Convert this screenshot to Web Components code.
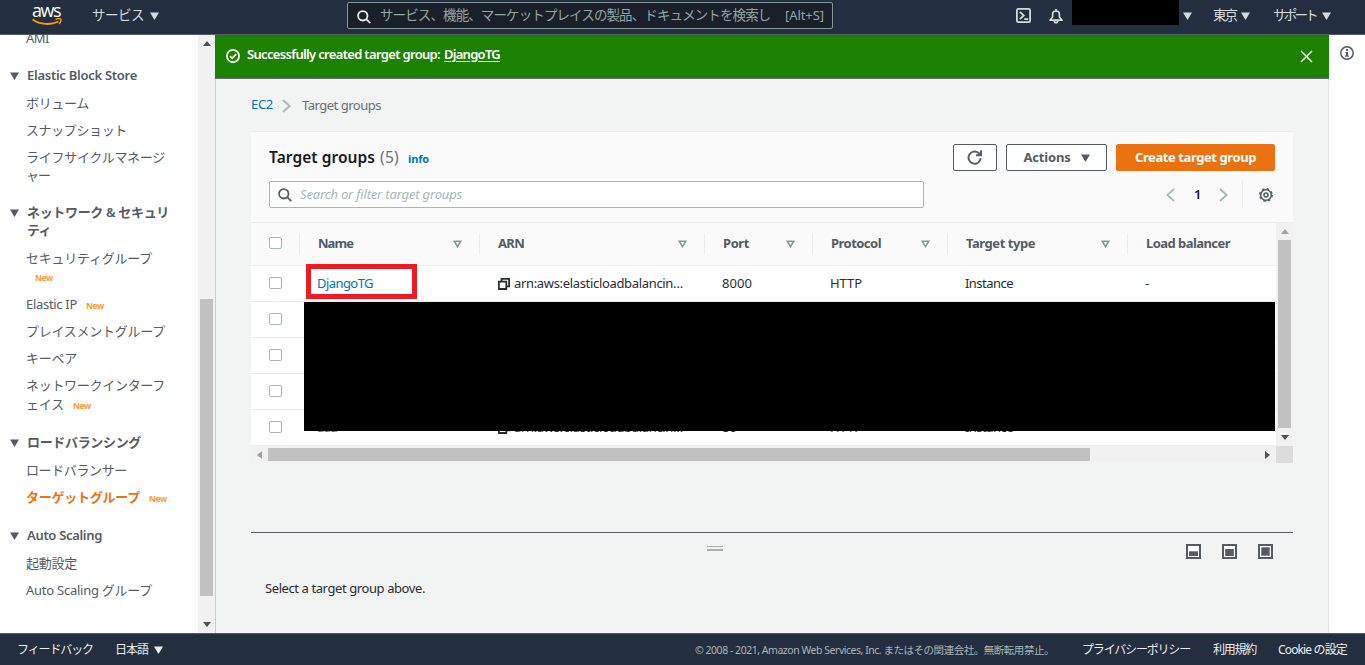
<!DOCTYPE html>
<html lang="ja">
<head>
<meta charset="utf-8">
<title>Target groups | EC2</title>
<style>
  html, body { margin: 0; height: 100%; overflow: hidden; }
  body { font: 13px/18px "Noto Sans", "Noto Sans CJK JP", sans-serif; color: #16191f; }
</style>
</head>
<body>
<console-app>
  <console-header slot="header"></console-header>
  <side-nav slot="nav">
    <nav-item style="--gap:-6px"><ui-text w="23">AMI</ui-text></nav-item>
    <nav-item section style="--gap:19px"><ui-text w="110">Elastic Block Store</ui-text></nav-item>
    <nav-item style="--gap:10px"><ui-text w="63">ボリューム</ui-text></nav-item>
    <nav-item><ui-text w="101">スナップショット</ui-text></nav-item>
    <nav-item><ui-text w="139">ライフサイクルマネージ</ui-text><br><ui-text w="24">ャー</ui-text></nav-item>
    <nav-item section style="--gap:19px"><ui-text w="142">ネットワーク &amp; セキュリ</ui-text><br><ui-text w="24">ティ</ui-text></nav-item>
    <nav-item style="--gap:10px"><ui-text w="126">セキュリティグループ</ui-text><br><new-tag></new-tag></nav-item>
    <nav-item style="--gap:10px"><ui-text w="51">Elastic IP</ui-text><new-tag></new-tag></nav-item>
    <nav-item><ui-text w="139">プレイスメントグループ</ui-text></nav-item>
    <nav-item><ui-text w="51">キーペア</ui-text></nav-item>
    <nav-item style="--line:19px"><ui-text w="139">ネットワークインターフ</ui-text><br><ui-text w="38">ェイス</ui-text><new-tag></new-tag></nav-item>
    <nav-item section style="--gap:19px"><ui-text w="114">ロードバランシング</ui-text></nav-item>
    <nav-item style="--gap:10px"><ui-text w="101">ロードバランサー</ui-text></nav-item>
    <nav-item active><ui-text w="114">ターゲットグループ</ui-text><new-tag></new-tag></nav-item>
    <nav-item section style="--gap:20px"><ui-text w="75">Auto Scaling</ui-text></nav-item>
    <nav-item style="--gap:10px"><ui-text w="51">起動設定</ui-text></nav-item>
    <nav-item><ui-text w="126">Auto Scaling グループ</ui-text></nav-item>
  </side-nav>
  <flash-bar slot="flash"><ui-text w="193">Successfully created target group:</ui-text><ui-text w="56" class="u">DjangoTG</ui-text></flash-bar>
  <bread-crumb><ui-text w="22" slot="root">EC2</ui-text><ui-text w="79">Target groups</ui-text></bread-crumb>
  <target-groups></target-groups>
  <split-panel><ui-text w="160">Select a target group above.</ui-text></split-panel>
  <console-footer slot="footer"></console-footer>
</console-app>

<script>
const ICONS = {
  down: [9, 8, '<path d="M0 .5h9L4.5 8z" fill="currentColor"/>'],
  filter: [9, 8, '<path d="M1.2 1.2h6.6L4.5 6.6z" fill="none" stroke="currentColor" stroke-width="1.6"/>'],
  search: [14, 14, '<g fill="none" stroke="currentColor" stroke-width="1.8"><circle cx="5.8" cy="5.8" r="4.7"/><path d="M9.2 9.2l4.1 4"/></g>'],
  shell: [15, 15, '<g fill="none" stroke="currentColor" stroke-width="1.8"><rect x=".9" y=".9" width="13.2" height="13.2" rx="1.6"/><path d="M3.8 3.8l4 3.7-4 3.7M8.2 11.2h4"/></g>'],
  bell: [14, 15, '<g fill="none" stroke="currentColor" stroke-width="1.7" stroke-linejoin="round"><path d="M1 11.2h12L10.4 8V5.6C10.4 3.3 9 2 7 2S3.6 3.3 3.6 5.6V8z"/><path d="M7 0v2"/><path d="M5.2 11.5c0 3 3.6 3 3.6 0"/></g>'],
  check: [14, 14, '<g fill="none" stroke="currentColor" stroke-width="1.7"><circle cx="7" cy="7" r="6.1"/><path d="M3.9 7l2.3 2.3 4-4.2"/></g>'],
  close: [13, 13, '<path d="M1 1l11 11M12 1L1 12" fill="none" stroke="currentColor" stroke-width="1.7"/>'],
  info: [14, 14, '<circle cx="7" cy="7" r="6.2" fill="none" stroke="currentColor" stroke-width="1.5"/><path d="M6 3h2v2H6zM5.2 6H8v3.5h1v1.2H5V9.500h1V7.100h-.8z" fill="currentColor"/>'],
  chevron: [9, 14, '<path d="M1 1l6.600 6L1 13" fill="none" stroke="currentColor" stroke-width="1.9"/>'],
  back: [9, 14, '<path d="M8 1L1.400 7 8 13" fill="none" stroke="currentColor" stroke-width="1.7"/>'],
  refresh: [16, 15, '<path d="M13.700 8.200A6.100 6.100 0 1 1 11.600 3l1.700 1.500M14 .3v5H9" fill="none" stroke="currentColor" stroke-width="1.9"/>'],
  copy: [12, 12, '<path d="M3.500 3.500v-2.600h7.600v7.400H9M.9 3.700h7.400V11H.9z" fill="none" stroke="currentColor" stroke-width="1.8"/>'],
  gear: [14, 14, '<g fill="none" stroke="currentColor"><circle cx="7" cy="7" r="5.300" stroke-width="1.5"/><circle cx="7" cy="7" r="6.200" stroke-width="1.5" stroke-dasharray="2.435 2.435"/><circle cx="7" cy="7" r="2" stroke-width="1.6"/></g>'],
  low: [15, 15, '<path d="M1 1h13v13H1z" fill="#fff" stroke="currentColor" stroke-width="2"/><path d="M3 7.300h9v4.700H3z" fill="currentColor"/>'],
  mid: [15, 15, '<path d="M1 1h13v13H1z" fill="#fff" stroke="currentColor" stroke-width="2"/><path d="M3.200 5h8.600v7H3.200z" fill="currentColor"/>'],
  full: [15, 15, '<path d="M1 1h13v13H1z" fill="#fff" stroke="currentColor" stroke-width="2"/><path d="M3.300 3.300h8.400v8.400H3.300z" fill="currentColor"/>'],
  smile: [30, 8, '<path d="M.6 1.500C8 6.800 19 7.200 26.500 3.500" fill="none" stroke="currentColor" stroke-width="1.9"/><path d="M23.500 1.300c2-.8 4.800-.8 5.300-.2.400 1-.3 3.500-1.700 5" fill="none" stroke="currentColor" stroke-width="1.4"/>']
};

// small helper: one open shadow root per element
class Base extends HTMLElement {
  connectedCallback() {
    if (this.shadowRoot) return;
    this.attachShadow({ mode: 'open' }).innerHTML = '<style>:host{display:block;box-sizing:border-box}</style>' + this.html();
  }
}

customElements.define('ui-icon', class extends Base {
  html() {
    const [w, h, body] = ICONS[this.getAttribute('name')];
    return `<style>:host{flex:none;width:${w}px;height:${h}px}svg{display:block}</style>
      <svg width="${w}" height="${h}" viewBox="0 0 ${w} ${h}">${body}</svg>`;
  }
});

customElements.define('console-app', class extends Base {
  html() {
    return `<style>
      :host { height: 665px; display: grid; grid-template-rows: 35px 598px 32px; }
      .middle { display: grid; grid-template-columns: 215px 1114px 36px; }
      .content { background: #f2f3f3; overflow: hidden; box-shadow: inset 1px 0 #ccc, inset -1px 0 #e3e3e3; }
      .main { padding: 0 36px; }
      .help { padding: 11px 0 0 11px; color: #545b64; background: #fff; }
    </style>
    <slot name="header"></slot>
    <div class="middle">
      <slot name="nav"></slot>
      <div class="content"><slot name="flash"></slot><div class="main"><slot></slot></div></div>
      <div class="help"><ui-icon name="info"></ui-icon></div>
    </div>
    <slot name="footer"></slot>`;
  }
});

customElements.define('console-header', class extends Base {
  html() {
    return `<style>
      :host { height: 35px; display: flex; align-items: flex-start; background: #232f3e; border-bottom: 1px solid #545b64; color: #d5dbdb; }
      :host > * { flex: none; }
      .logo { width: 30px; margin: 3px 30px 0 32px; color: #fff; font: 500 18px/14px "Open Sans", sans-serif; }
      .logo ui-icon { color: #f90; margin-top: 1px; }
      .t { padding-top: 6px; font-size: 13.5px; }
      .tri { margin: 12px 0 0 6px; }
      .search { box-sizing: border-box; width: 486px; height: 27px; margin: 2px 183px 0 188px; padding: 0 8px 0 9px; display: flex; align-items: center; border: 1px solid #879596; border-radius: 2px; background: #1a202a; color: #95a5a6; }
      .search ui-icon { color: #eaeded; margin: 3px 9px 0 0; }
      .search ui-text { margin-top: -1px; }
      .clip { width: 391px; overflow: hidden; margin-right: 14px; font-size: 13.5px; }
      .who { width: 107px; height: 25px; background: #000; margin-left: 9px; }
    </style>
    <div class="logo"><ui-text w="28">aws</ui-text><ui-icon name="smile"></ui-icon></div>
    <ui-text class="t" w="52">サービス</ui-text><ui-icon class="tri" name="down"></ui-icon>
    <div class="search"><ui-icon name="search"></ui-icon><div class="clip"><ui-text w="403">サービス、機能、マーケットプレイスの製品、ドキュメントを検索しま</ui-text></div><ui-text w="39">[Alt+S]</ui-text></div>
    <ui-icon name="shell" style="margin-top:8px"></ui-icon>
    <ui-icon name="bell" style="margin:9px 0 0 18px"></ui-icon>
    <div class="who"></div><ui-icon class="tri" name="down" style="margin-left:4px"></ui-icon>
    <ui-text class="t" w="23" style="margin-left:21px">東京</ui-text><ui-icon class="tri" name="down" style="margin-left:5px"></ui-icon>
    <ui-text class="t" w="43" style="margin-left:23px">サポート</ui-text><ui-icon class="tri" name="down"></ui-icon>`;
  }
});

customElements.define('console-footer', class extends Base {
  html() {
    return `<style>
      :host { height: 32px; display: flex; align-items: center; background: #232f3e; border-top: 1px solid #545b64; color: #eaeded; padding: 0 18px 0 17px; font-size: 12px; }
      .copy { font-size: 10.5px; color: #aab7b8; margin: 0 28px 0 auto; }
    </style>
    <ui-text w="76">フィードバック</ui-text>
    <ui-text w="33" style="margin:0 6px 0 22px">日本語</ui-text><ui-icon name="down"></ui-icon>
    <ui-text w="359" class="copy">© 2008 - 2021, Amazon Web Services, Inc. またはその関連会社。無断転用禁止。</ui-text>
    <ui-text w="108">プライバシーポリシー</ui-text>
    <ui-text w="43" style="margin:0 22px 0 23px">利用規約</ui-text>
    <ui-text w="69">Cookie の設定</ui-text>`;
  }
});

// classic 17px scrollbar; --a is the space before the thumb, --b its length
customElements.define('scroll-bar', class extends Base {
  html() {
    return `<style>
      :host { background: #f1f1f1; display: flex; flex-direction: column; align-items: center; justify-content: space-between; width: 17px; }
      :host([horizontal]) { flex-direction: row; width: auto; height: 17px; }
      i { flex: none; border: 4px solid transparent; width: 0; height: 0; }
      .s { margin-top: 2px; border-bottom: 5px solid var(--start, #505050); }
      .e { margin-bottom: 2px; border-top: 5px solid #505050; }
      .track { flex: 1; align-self: stretch; }
      .thumb { background: #c1c1c1; margin: var(--a) 2px 0; height: var(--b); }
      :host([horizontal]) .s { margin: 0 0 0 2px; border: 4px solid transparent; border-right: 5px solid #a3a3a3; }
      :host([horizontal]) .e { margin: 0 2px 0 0; border: 4px solid transparent; border-left: 5px solid #505050; }
      :host([horizontal]) .thumb { margin: 2px 0 0 var(--a); width: var(--b); height: 13px; }
    </style><i class="s"></i><div class="track"><div class="thumb"></div></div><i class="e"></i>`;
  }
});

customElements.define('side-nav', class extends Base {
  html() {
    return `<style>
      :host { display: flex; height: 598px; background: #fff; overflow: hidden; color: #545b64; }
      .list { width: 198px; height: 598px; overflow: hidden; display: flow-root; }
      scroll-bar { --a: 253px; --b: 297px; height: 598px; }
    </style><div class="list"><slot></slot></div><scroll-bar></scroll-bar>`;
  }
});

customElements.define('nav-item', class extends Base {
  html() {
    return `<style>
      :host { margin-top: var(--gap, 9px); padding-left: 26px; display: flex; line-height: var(--line, 18px); white-space: nowrap; }
      :host([section]) { font-weight: 600; padding-left: 10px; }
      :host([active]) { font-weight: 700; color: #ec7211; }
      .tri { margin: 6px 8px 0 0; }
    </style>${this.hasAttribute('section') ? '<ui-icon class="tri" name="down"></ui-icon>' : ''}<div><slot></slot></div>`;
  }
});

customElements.define('new-tag', class extends Base {
  html() {
    return `<style>:host{display:inline-block;margin-left:9px;height:18px;vertical-align:top;color:#ff9933;font:700 8.5px/22px "Noto Sans",sans-serif}</style><ui-text w="18">New</ui-text>`;
  }
});

customElements.define('flash-bar', class extends Base {
  html() {
    return `<style>
      :host { height: 44px; display: flex; background: #1d8102; border-bottom: 1px solid #687078; color: #fff; font-weight: 600; padding: 10px 16px 0 11px; }
      .ok { margin: 4px 7px 0 0; }
      .x { margin: 5px 0 0 auto; color: #eaeded; }
      ::slotted(.u) { margin-left: 4px; text-decoration: underline; text-underline-offset: 2px; }
    </style><ui-icon class="ok" name="check"></ui-icon><slot></slot><ui-icon class="x" name="close"></ui-icon>`;
  }
});

customElements.define('bread-crumb', class extends Base {
  html() {
    return `<style>
      :host { display: flex; height: 52px; padding-top: 17px; color: #687078; }
      ui-icon { color: #aab7b8; margin: 3px 11px 0 9px; }
      ::slotted([slot=root]) { color: #0073bb; margin-top: -1px; }
    </style><slot name="root"></slot><ui-icon name="chevron"></ui-icon><slot></slot>`;
  }
});

customElements.define('ui-button', class extends Base {
  html() {
    return `<style>
      :host { height: 27px; display: flex; align-items: center; justify-content: center; gap: 10px; border: 1px solid #545b64; border-radius: 2px; background: #fff; color: #545b64; font-weight: 700; }
      :host([primary]) { background: #ec7211; border-color: #ec7211; color: #fff; }
      ::slotted(ui-text) { margin-top: -1px; }
    </style><slot></slot>`;
  }
});

customElements.define('check-box', class extends Base {
  html() {
    return '<style>:host{width:13px;height:12px;border:1px solid #aab7b8;border-radius:2px;background:#fff}</style>';
  }
});

customElements.define('table-row', class extends Base {
  html() {
    return `<style>
      :host { display: grid; grid-template-columns: 49px 180px 225px 108px 135px 180px 148px; align-items: center; height: 36px; border-bottom: 1px solid #eaeded; background: #fff; }
      :host([head]) { height: 43px; background: #fafafa; font-weight: 700; color: #545b64; }
      check-box { margin: -1px 0 0 18px; }
      :host([head]) check-box { margin-top: -2px; }
    </style><check-box></check-box><slot></slot>`;
  }
});

customElements.define('table-cell', class extends Base {
  html() {
    return `<style>
      :host { display: flex; align-items: center; padding-left: 17px; height: 22px; color: #2a2d33; gap: 4px; }
      :host([link]) { color: #0073bb; }
      :host([head]) { padding: 0 18px 0 19px; justify-content: space-between; color: inherit; box-shadow: inset 1px 0 #eaeded; margin-left: -1px; }
      ::slotted(ui-text) { margin-top: -2px; }
      ui-icon { color: #879596; }
    </style><slot></slot>${this.hasAttribute('filter') ? '<ui-icon name="filter"></ui-icon>' : ''}`;
  }
});

customElements.define('target-groups', class extends Base {
  html() {
    const heads = [['Name', 35], ['ARN', 26], ['Port', 26], ['Protocol', 50], ['Target type', 69], ['Load balancer', 84]];
    const arn = '<table-cell style="padding-left:18px"><ui-icon name="copy"></ui-icon><ui-text w="169">arn:aws:elasticloadbalancin…</ui-text></table-cell>';
    const row = (name, w, port, pw) => `<table-row>
      <table-cell link><ui-text w="${w}">${name}</ui-text></table-cell>${arn}
      <table-cell><ui-text w="${pw}">${port}</ui-text></table-cell>
      <table-cell><ui-text w="32">HTTP</ui-text></table-cell>
      <table-cell><ui-text w="48">Instance</ui-text></table-cell>
      <table-cell><ui-text w="5">-</ui-text></table-cell></table-row>`;
    return `<style>
      :host { width: 1042px; height: 401px; }
      .top { height: 91px; box-sizing: border-box; background: #fafafa; border-top: 1px solid #eaeded; padding: 12px 18px 0; }
      .bar { display: flex; height: 27px; align-items: center; }
      .bar + .bar { margin-top: 10px; }
      .title { font-size: 15.5px; font-weight: 600; margin-top: -2px; }
      .count { font-size: 15.5px; color: #687078; margin: -2px 0 0 5px; }
      .info { font-size: 11px; font-weight: 700; color: #0073bb; margin: 3px auto 0 9px; }
      .find { box-sizing: border-box; width: 655px; height: 27px; border: 1px solid #aab7b8; border-radius: 2px; background: #fff; display: flex; align-items: center; gap: 8px; padding-left: 8px; margin-right: auto; color: #545b64; }
      .find ui-text { font-style: italic; color: #aab7b8; margin-top: -1px; }
      .pg { color: #aab7b8; }
      .one { font-weight: 600; margin: -1px 18px 0 19px; }
      .sep { width: 1px; height: 27px; background: #eaeded; margin: 0 16px 0 14px; }
      .gear { color: #545b64; margin-right: 2px; }
      .view { position: relative; display: grid; grid-template: 223px 17px / 1025px 17px; border-top: 1px solid #eaeded; box-sizing: border-box; height: 242px; }
      .rows { height: 223px; }
      .view > scroll-bar:not([horizontal]) { height: 223px; --start: #a3a3a3; --a: 6px; --b: 188px; }
      .view > [horizontal] { --a: 6px; --b: 822px; }
      .corner { background: #dcdcdc; }
      .mask { position: absolute; left: 53px; top: 79px; width: 971px; height: 129px; background: #000; }
      .mark { position: absolute; box-sizing: border-box; left: 55px; top: 41px; width: 111px; height: 35px; border: 5px solid #ed1c24; }
    </style>
    <div class="top">
      <div class="bar">
        <ui-text class="title" w="106">Target groups</ui-text><ui-text class="count" w="19">(5)</ui-text><ui-text class="info" w="21">info</ui-text>
        <ui-button style="width:44px"><ui-icon name="refresh"></ui-icon></ui-button>
        <ui-button style="width:101px;margin:0 9px"><ui-text w="47">Actions</ui-text><ui-icon name="down"></ui-icon></ui-button>
        <ui-button primary style="width:159px"><ui-text w="121">Create target group</ui-text></ui-button>
      </div>
      <div class="bar">
        <div class="find"><ui-icon name="search"></ui-icon><ui-text w="162">Search or filter target groups</ui-text></div>
        <ui-icon class="pg" name="back"></ui-icon><ui-text w="7" class="one">1</ui-text><ui-icon class="pg" name="chevron"></ui-icon>
        <div class="sep"></div><ui-icon class="gear" name="gear"></ui-icon>
      </div>
    </div>
    <div class="view">
      <div class="rows">
        <table-row head>${heads.map(([t, w], i) => `<table-cell head ${i < 5 ? 'filter' : ''}><ui-text w="${w}">${t}</ui-text></table-cell>`).join('')}</table-row>
        ${row('DjangoTG', 56, '8000', 30)}
        <table-row></table-row><table-row></table-row><table-row></table-row>
        ${row('aaa', 20, '80', 15)}
      </div>
      <scroll-bar></scroll-bar>
      <scroll-bar horizontal></scroll-bar>
      <div class="corner"></div>
      <div class="mask"></div>
      <div class="mark"></div>
    </div>`;
  }
});

customElements.define('split-panel', class extends Base {
  html() {
    return `<style>
      :host { width: 1042px; border-top: 1px solid #545b64; color: #2a2d33; }
      .grip { display: grid; grid-template-columns: 456px 16px 1fr; padding: 11px 20px 0 0; height: 46px; box-sizing: border-box; }
      .handle { border: solid #aab0b0; border-width: 1px 0 2px; margin-top: 2px; height: 2px; }
      .sizes { display: flex; justify-content: flex-end; gap: 21px; color: #545b64; }
      .body { padding-left: 14px; }
    </style>
    <div class="grip"><span></span><div class="handle"></div><div class="sizes"><ui-icon name="low"></ui-icon><ui-icon name="mid"></ui-icon><ui-icon name="full"></ui-icon></div></div>
    <div class="body"><slot></slot></div>`;
  }
});

// text run that spreads its letters over a given width
customElements.define('ui-text', class extends Base {
  html() {
    return '<style>:host{display:inline-block;flex:none;white-space:nowrap;vertical-align:top}span{display:inline-block;vertical-align:top;text-decoration:inherit;text-underline-offset:inherit}</style><span><slot></slot></span>';
  }
  connectedCallback() {
    super.connectedCallback();
    const w = +this.getAttribute('w');
    const span = this.shadowRoot.querySelector('span');
    const n = this.textContent.length;
    span.style.letterSpacing = (w - span.getBoundingClientRect().width) / n + 'px';
    this.style.width = w + 'px';
  }
});
</script>
</body>
</html>
